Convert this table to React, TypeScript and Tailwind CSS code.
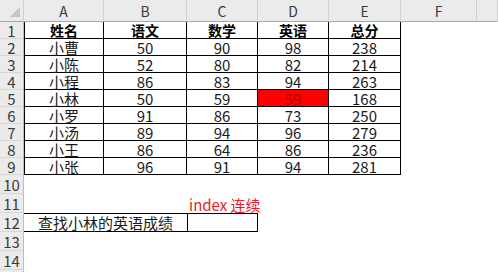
import React from 'react';

const cols = ['A', 'B', 'C', 'D', 'E', 'F', ''];

const rows: string[][] = [
  ['姓名', '语文', '数学', '英语', '总分'],
  ['小曹', '50', '90', '98', '238'],
  ['小陈', '52', '80', '82', '214'],
  ['小程', '86', '83', '94', '263'],
  ['小林', '50', '59', '59', '168'],
  ['小罗', '91', '86', '73', '250'],
  ['小汤', '89', '94', '96', '279'],
  ['小王', '86', '64', '86', '236'],
  ['小张', '96', '91', '94', '281'],
];

const font = { fontFamily: '"Noto Sans CJK SC", "Liberation Sans", sans-serif' };

const RowHead = ({ n, h }: { n?: number; h: string }) => (
  <div
    className={`${h} flex items-center justify-center bg-[#ebebeb] border-b border-r border-b-[#d6d6d6] border-r-[#bdbdbd] text-[15px] leading-none text-[#3a3a3a]`}
  >
    {n}
  </div>
);

export default function App() {
  return (
    <div className="w-[498px] h-[272px] overflow-hidden bg-white text-[#1a1a1a]" style={font}>
      <div className="grid grid-cols-[24px_80px_83px_71px_71px_72px_76px_21px]">
        {/* column headers */}
        <div className="h-[22px] relative bg-[#ebebeb] border-b border-r border-b-[#a8a8a8] border-r-[#d0d0d0]">
          <svg className="absolute right-[3px] bottom-[4px]" width="10" height="10" viewBox="0 0 10 10">
            <polygon points="10,0 10,10 0,10" fill="#c4c4c4" />
          </svg>
        </div>
        {cols.map((c, k) => (
          <div
            key={k}
            className="h-[22px] flex items-center justify-center bg-[#ebebeb] border-b border-r border-b-[#a8a8a8] border-r-[#d0d0d0] text-[14px] leading-none text-[#3a3a3a]"
          >
            {c}
          </div>
        ))}

        {/* data table */}
        {rows.map((r, i) => (
          <React.Fragment key={i}>
            <RowHead n={i + 1} h="h-[17px]" />
            {r.map((v, j) => {
              const hot = i === 4 && j === 3;
              return (
                <div
                  key={j}
                  className={`h-[17px] flex items-center justify-center border-b border-r border-black leading-none ${
                    i === 0 ? 'font-bold text-[14px] text-black' : 'text-[15px]'
                  } ${j === 0 ? 'border-l' : ''} ${hot ? 'bg-[#ff0000] text-[#b00000]' : ''}`}
                >
                  {v}
                </div>
              );
            })}
            <div className="h-[17px]" />
            <div className="h-[17px]" />
          </React.Fragment>
        ))}

        {/* row 10 */}
        <RowHead n={10} h="h-[19px]" />
        <div className="col-span-7 h-[19px]" />

        {/* row 11 */}
        <RowHead n={11} h="h-[19px]" />
        <div className="col-span-2 h-[19px]" />
        <div className="col-span-5 h-[19px] flex items-end pb-[1px] pl-[2px] text-[15px] leading-none text-[#e8202a] whitespace-nowrap">
          index 连续
        </div>

        {/* row 12 */}
        <RowHead n={12} h="h-[19px]" />
        <div className="col-span-2 h-[19px] flex items-center justify-center border-t border-b border-black text-[15px] leading-none">
          查找小林的英语成绩
        </div>
        <div className="h-[19px] border border-black" />
        <div className="col-span-4 h-[19px]" />

        {/* rows 13, 14 */}
        <RowHead n={13} h="h-[19px]" />
        <div className="col-span-7 h-[19px]" />
        <RowHead n={14} h="h-[19px]" />
        <div className="col-span-7 h-[19px]" />
        <RowHead h="h-[19px]" />
        <div className="col-span-7 h-[19px]" />
      </div>
    </div>
  );
}
